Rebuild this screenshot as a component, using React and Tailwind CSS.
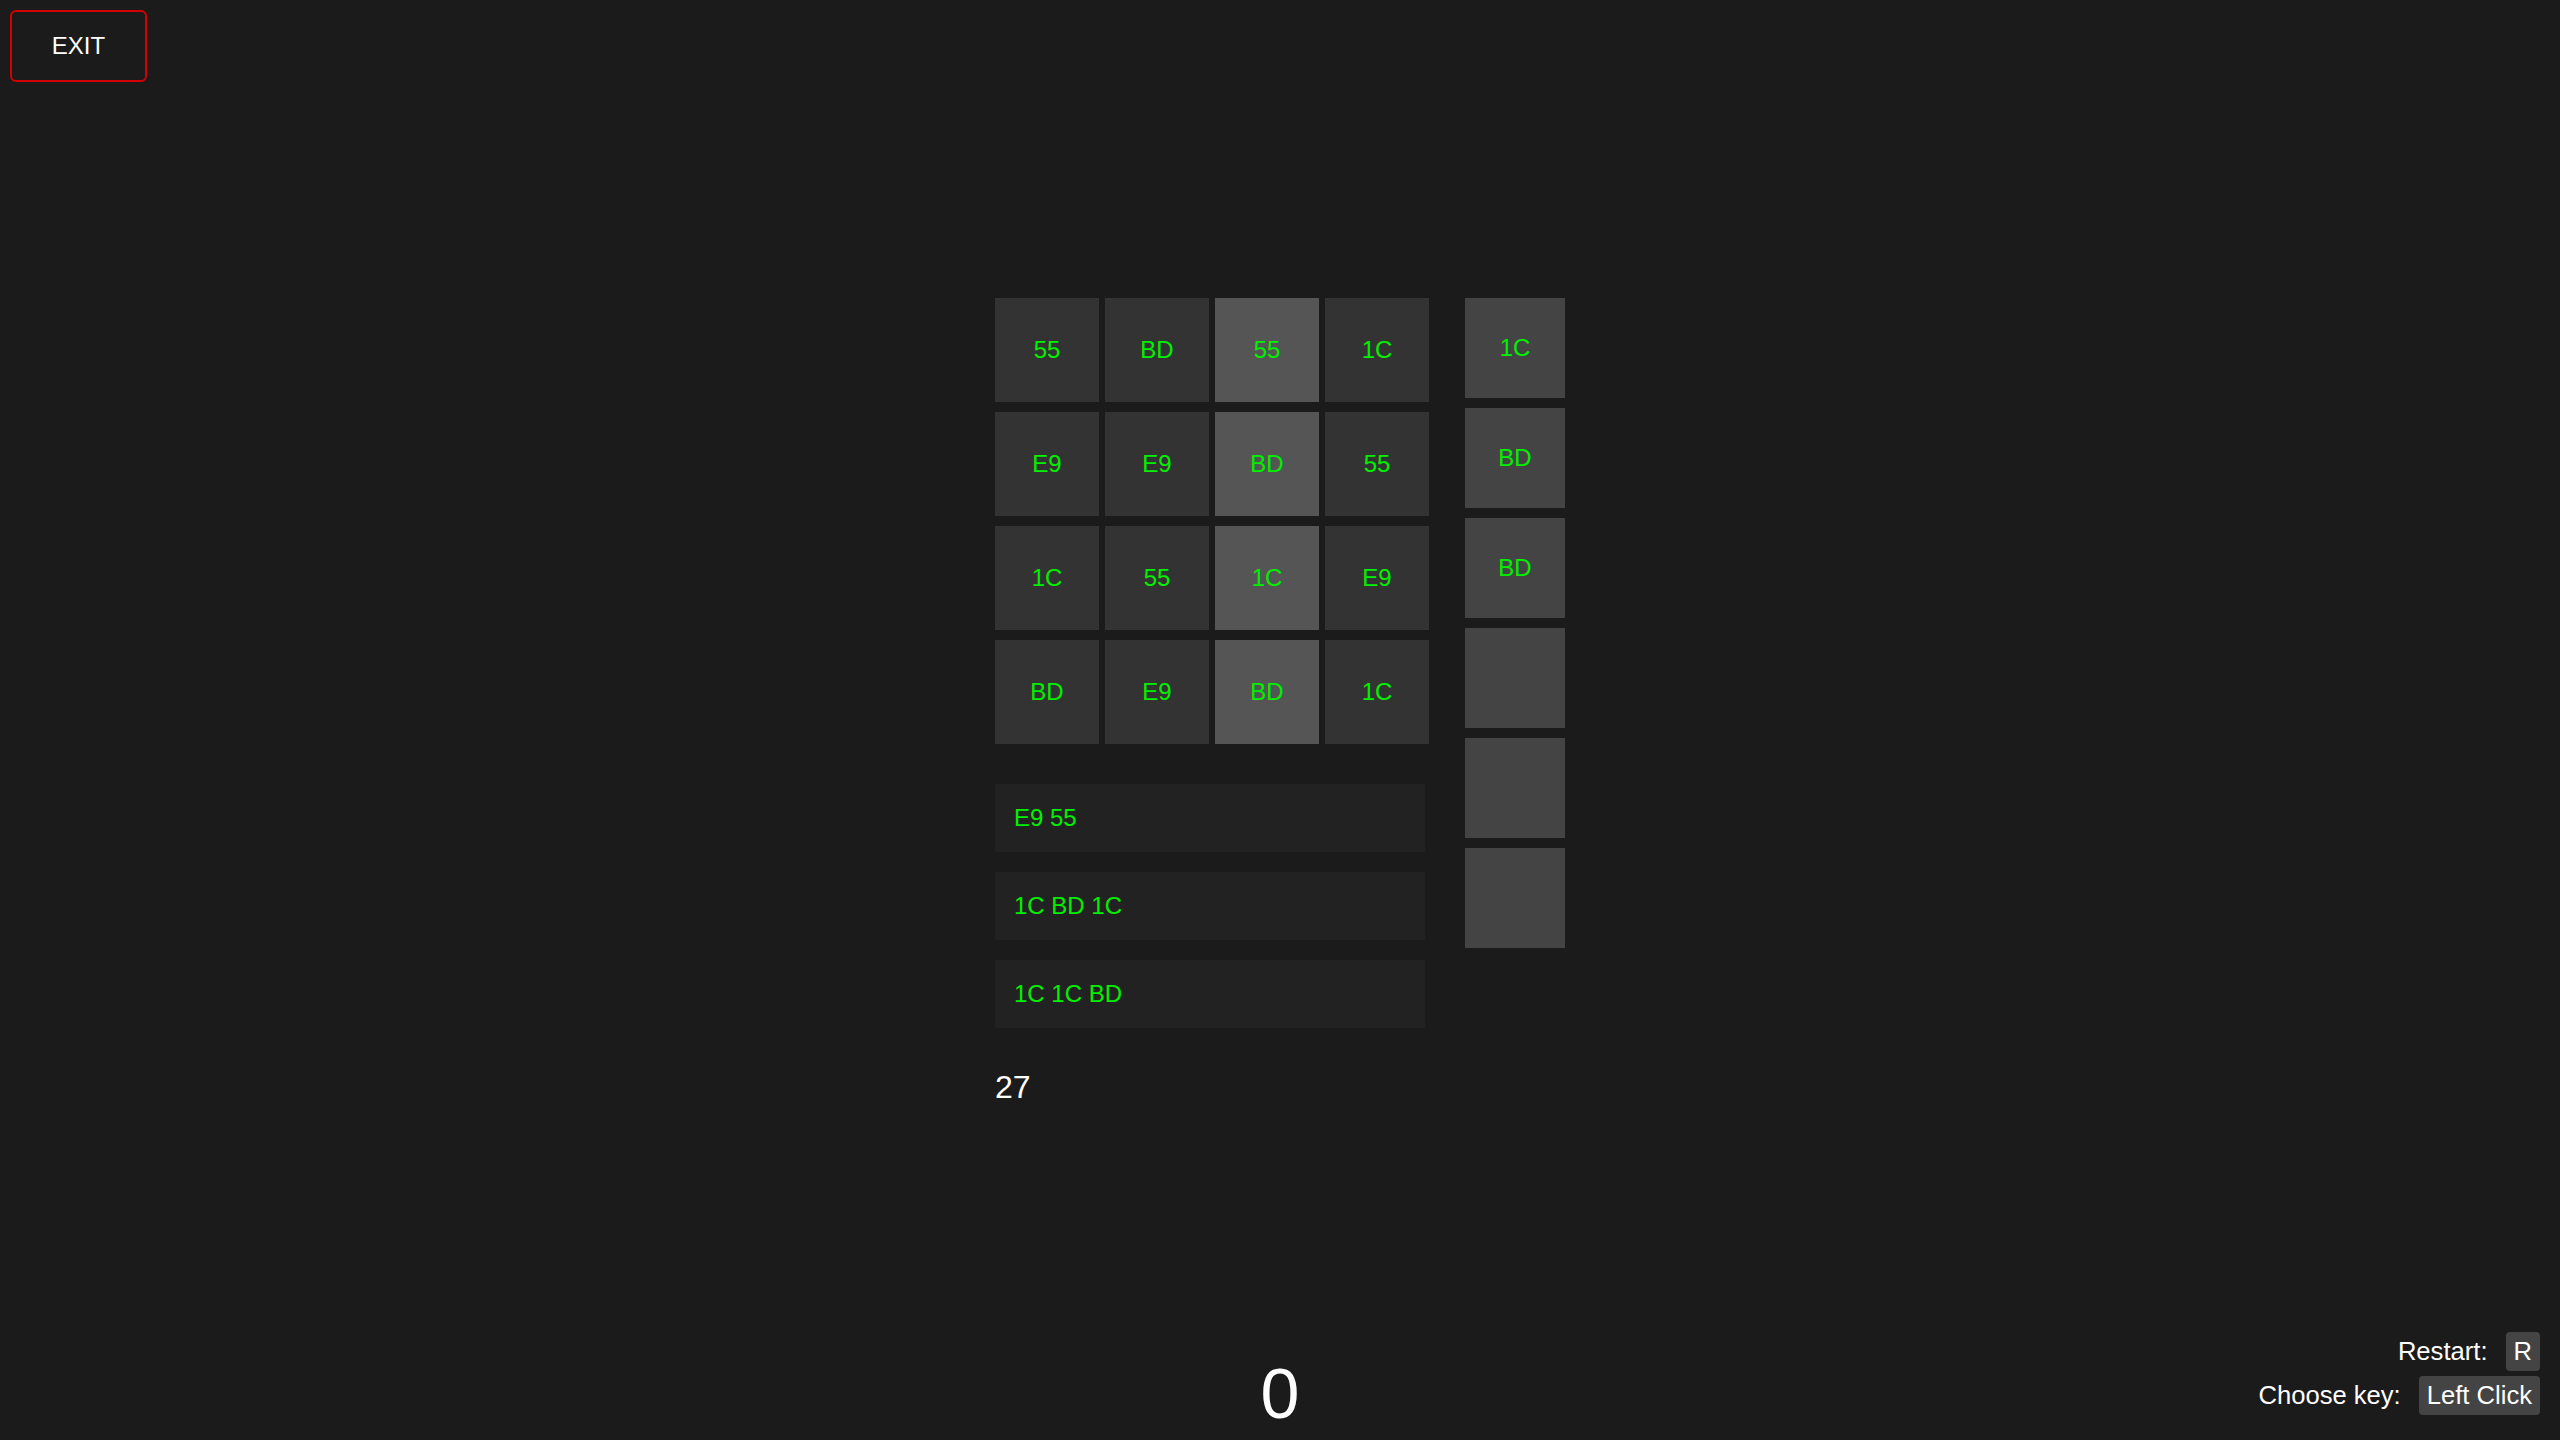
import React from 'react';

const grid = [
  ['55', 'BD', '55', '1C'],
  ['E9', 'E9', 'BD', '55'],
  ['1C', '55', '1C', 'E9'],
  ['BD', 'E9', 'BD', '1C'],
];

const buffer = ['1C', 'BD', 'BD', '', '', ''];

const sequences = ['E9 55', '1C BD 1C', '1C 1C BD'];

const Cell = ({ value, active }) => (
  <div
    className={`w-[104px] h-[104px] flex items-center justify-center text-[24px] text-[#00f000] ${
      active ? 'bg-[#555555]' : 'bg-[#333333]'
    }`}
  >
    {value}
  </div>
);

const KeyHint = ({ label, keyName }) => (
  <div className="flex items-center gap-[18px]">
    <span>{label}</span>
    <span className="bg-[#444444] rounded-[4px] px-2 py-[5px] leading-[29px]">{keyName}</span>
  </div>
);

export default function App() {
  return (
    <div
      className="h-screen flex flex-col bg-[#1b1b1b] text-white overflow-hidden"
      style={{ fontFamily: '"Liberation Sans", Arial, sans-serif' }}
    >
      <div className="p-[10px]">
        <button className="w-[137px] h-[72px] border-2 border-[#d40000] rounded-[6px] text-[24px] text-white">
          EXIT
        </button>
      </div>

      <div className="flex-1 flex justify-center gap-[36px] pt-[206px]">
        <div className="w-[434px] flex flex-col">
          <div className="grid grid-cols-4 gap-x-[6px] gap-y-[10px]">
            {grid.map((row, r) =>
              row.map((v, c) => <Cell key={`${r}-${c}`} value={v} active={c === 2} />)
            )}
          </div>

          <div className="flex flex-col gap-[20px] mt-[40px] w-[430px]">
            {sequences.map((s) => (
              <div key={s} className="h-[68px] flex items-center pl-[19px] bg-[#222222] text-[24px] text-[#00f000]">
                {s}
              </div>
            ))}
          </div>

          <div className="mt-[35px] text-[32px]">27</div>
        </div>

        <div className="flex flex-col gap-[10px]">
          {buffer.map((v, i) => (
            <div
              key={i}
              className="w-[100px] h-[100px] bg-[#444444] flex items-center justify-center text-[24px] text-[#00f000]"
            >
              {v}
            </div>
          ))}
        </div>
      </div>

      <div className="grid grid-cols-3 items-end">
        <div />
        <div className="text-center text-[70px] leading-[80px] mb-[6px]">0</div>
        <div className="flex flex-col items-end gap-[5px] pr-[20px] pb-[25px] text-[25.6px]">
          <KeyHint label="Restart:" keyName="R" />
          <KeyHint label="Choose key:" keyName="Left Click" />
        </div>
      </div>
    </div>
  );
}
